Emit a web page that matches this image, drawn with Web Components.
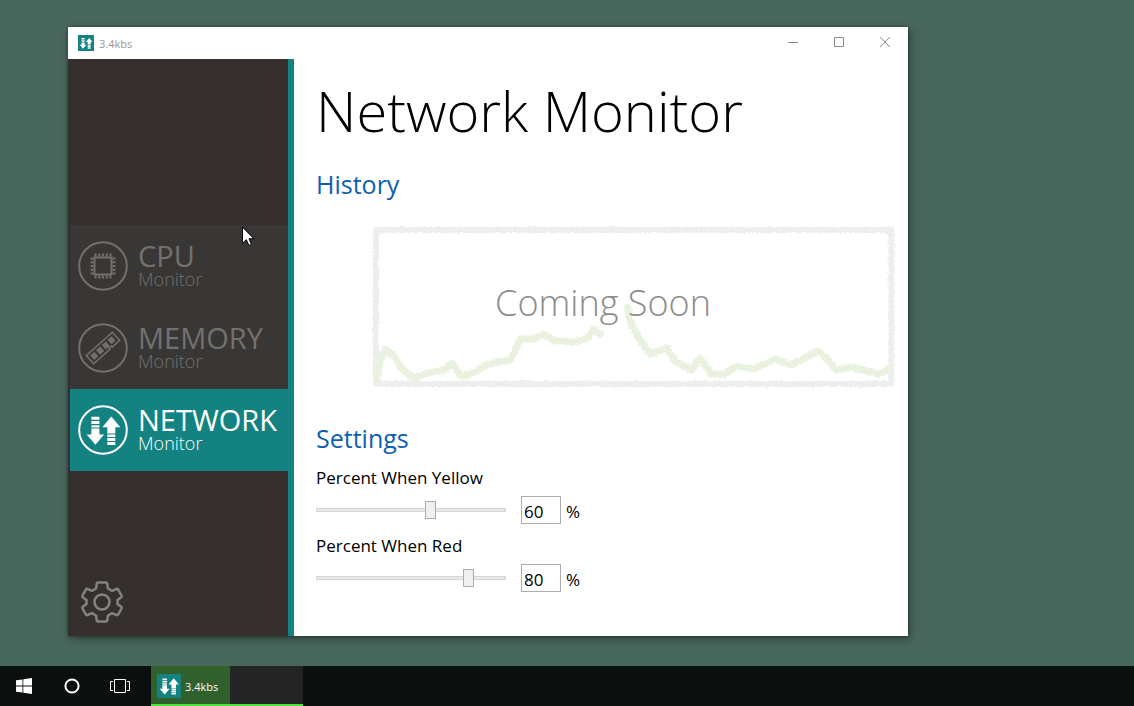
<!DOCTYPE html>
<html lang="en">
<head>
<meta charset="utf-8">
<title>Network Monitor</title>
<style>
  html, body {
    height: 100%;
    margin: 0;
  }
  body {
    --teal: #148280;
    --blue: #0e5fb0;
    font-family: "Open Sans", "Noto Sans", sans-serif;
    color: #000;
    background: #48675d;
  }
</style>
</head>
<body>
<monitor-desktop>
  <app-window caption="3.4kbs">
    <side-nav slot="nav">
      <nav-item name="CPU" icon="cpu"></nav-item>
      <nav-item name="MEMORY" icon="memory"></nav-item>
      <nav-item name="NETWORK" icon="network" active></nav-item>
    </side-nav>
    <monitor-page heading="Network Monitor">
      <history-chart slot="history"></history-chart>
      <percent-setting label="Percent When Yellow" value="60"></percent-setting>
      <percent-setting label="Percent When Red" value="80"></percent-setting>
    </monitor-page>
  </app-window>
  <mouse-pointer slot="pointer"></mouse-pointer>
  <task-bar slot="taskbar" caption="3.4kbs"></task-bar>
</monitor-desktop>

<script>
// up/down arrows, drawn on a 50x50 grid and shared by every network icon
const ARROWS = /* html */ `
  <path d="M13.400 11.700h8v3h-8zM13.400 16h8v3h-8zM13.400 20.200h8v2.400h-8zM13.400 23.600h8v6h4.700l-8.700 10.200l-8.700-10.200h4.700z"/>
  <path d="M29.300 40h8v-3h-8zM29.300 36h8v-3h-8zM29.300 32h8v-2.600h-8zM29.300 28.400h8v-6.200h5l-9-10.600l-9 10.600h5z"/>
`;

const ICONS = {
  cpu: /* html */ `
    <path fill="none" stroke="currentColor" stroke-width="2" d="M16.500 16.500h17v17h-17z"/>
    <path fill="none" stroke="currentColor" stroke-width="2"
      d="M17.500 12.500v3M21.300 12.500v3M25 12.500v3M28.700 12.500v3M32.500 12.500v3
         M17.500 34.500v3M21.300 34.500v3M25 34.500v3M28.700 34.500v3M32.500 34.500v3
         M12.500 17.500h3M12.500 21.300h3M12.500 25h3M12.500 28.700h3M12.500 32.500h3
         M34.500 17.500h3M34.500 21.300h3M34.500 25h3M34.500 28.700h3M34.500 32.500h3"/>
  `,
  memory: /* html */ `
    <g transform="rotate(-42 25 25)">
      <path fill="none" stroke="currentColor" stroke-width="1.500" d="M7.500 19.500h35v11h-10v-1.500h-3v1.500h-22z"/>
      <path d="M10.500 22h5.500v6h-5.500zM18.300 22h5.500v6h-5.500zM26 22h5.500v6h-5.500zM33.800 22h5.500v6h-5.500z"/>
    </g>
  `,
  network: ARROWS
};

class MonitorDesktop extends HTMLElement {
  constructor () {
    super();
    this.attachShadow({ mode: 'open' });
    this.shadowRoot.innerHTML = /* html */ `
      <style>
        :host {
          display: flex;
          flex-direction: column;
          min-height: 100vh;
          position: relative;
        }
        .desk {
          flex: 1;
          display: flex;
          box-sizing: border-box;
          padding: 27px 19.9% 30px 6%;
        }
        ::slotted(app-window) {
          flex: 1;
        }
      </style>
      <div class="desk"><slot></slot></div>
      <slot name="pointer"></slot>
      <slot name="taskbar"></slot>
    `;
  }
}
window.customElements.define('monitor-desktop', MonitorDesktop);

class AppWindow extends HTMLElement {
  constructor () {
    super();
    this.attachShadow({ mode: 'open' });
    this.shadowRoot.innerHTML = /* html */ `
      <style>
        :host {
          display: flex;
          flex-direction: column;
          background: #fff;
          box-shadow: 0 0 3px rgba(0, 0, 0, 0.4), 2px 3px 8px rgba(0, 0, 0, 0.35);
        }
        header {
          display: flex;
          align-items: center;
          height: 32px;
          padding-left: 10px;
          color: #999;
          font-size: 11px;
        }
        .logo {
          width: 16px;
          height: 16px;
          margin-right: 5px;
          background: var(--teal);
          fill: #fff;
        }
        .caption {
          flex: 1;
        }
        button {
          display: flex;
          align-items: center;
          justify-content: center;
          width: 46px;
          height: 32px;
          padding: 0;
          border: 0;
          background: none;
        }
        button svg {
          width: 12px;
          height: 12px;
          fill: none;
          stroke: #8c8c8c;
        }
        .body {
          flex: 1;
          display: flex;
        }
        ::slotted(monitor-page) {
          flex: 1;
        }
      </style>
      <header>
        <svg class="logo" viewBox="4 4 42 42" aria-hidden="true">${ARROWS}</svg>
        <span class="caption"></span>
        <button aria-label="Minimize"><svg viewBox="0 0 12 12"><path d="M1 5.500h10"/></svg></button>
        <button aria-label="Maximize"><svg viewBox="0 0 12 12"><path d="M1.500.500h9v9h-9z"/></svg></button>
        <button aria-label="Close"><svg viewBox="0 0 12 12"><path d="M1 0l10 10M11 0L1 10"/></svg></button>
      </header>
      <div class="body">
        <slot name="nav"></slot>
        <slot></slot>
      </div>
    `;
  }

  connectedCallback () {
    this.shadowRoot.querySelector('.caption').textContent = this.getAttribute('caption');
  }
}
window.customElements.define('app-window', AppWindow);

class SideNav extends HTMLElement {
  constructor () {
    super();
    this.attachShadow({ mode: 'open' });
    this.shadowRoot.innerHTML = /* html */ `
      <style>
        :host {
          display: grid;
          /* keeps the items in the middle and the gear at the bottom */
          grid-template-rows: 1fr auto 1fr;
          box-sizing: border-box;
          width: 226px;
          padding-left: 2px;
          border-right: 6px solid var(--teal);
          background: #35302e;
        }
        nav {
          grid-row: 2;
        }
        button {
          grid-row: 3;
          align-self: end;
          justify-self: start;
          width: 44px;
          height: 44px;
          margin: 0 0 12px 10px;
          padding: 0;
          border: 0;
          background: none;
        }
        svg {
          display: block;
          fill: none;
          stroke: #858382;
          stroke-width: 2.5;
          stroke-linejoin: round;
        }
      </style>
      <nav aria-label="Monitors"><slot></slot></nav>
      <button aria-label="Options">
        <svg width="44" height="44" viewBox="0 0 44 44">
          <path d="M18 2.500H26Q27 2.500 27.200 3.500L28 8.500L32 10.800L36.500 9Q37.600 8.600 38.200 9.600L41.500 15.500Q42 16.500 41.200 17.200L37.500 20V24L41.200 26.800Q42 27.500 41.500 28.500L38.200 34.400Q37.600 35.400 36.500 35L32 33.200L28 35.500L27.200 40.500Q27 41.500 26 41.500H18Q17 41.500 16.800 40.500L16 35.500L12 33.200L7.500 35Q6.400 35.400 5.800 34.400L2.500 28.500Q2 27.500 2.800 26.800L6.500 24V20L2.800 17.200Q2 16.500 2.500 15.500L5.800 9.600Q6.400 8.600 7.500 9L12 10.800L16 8.500L16.800 3.500Q17 2.500 18 2.500Z"/>
          <circle cx="22" cy="22" r="7.500"/>
        </svg>
      </button>
    `;
  }
}
window.customElements.define('side-nav', SideNav);

class NavItem extends HTMLElement {
  constructor () {
    super();
    this.attachShadow({ mode: 'open' });
  }

  connectedCallback () {
    this.shadowRoot.innerHTML = /* html */ `
      <style>
        :host {
          display: block;
          color: #73716f;
          background: #393735;
        }
        :host([active]) {
          color: #fff;
          background: var(--teal);
        }
        a {
          display: flex;
          align-items: center;
          gap: 10px;
          height: 82px;
          padding-left: 8px;
          color: inherit;
          text-decoration: none;
        }
        svg {
          width: 50px;
          height: 50px;
          fill: currentColor;
        }
        .name, .kind {
          display: block;
        }
        .name {
          font-size: 29px;
          line-height: 26px;
        }
        .kind {
          font-size: 18px;
          line-height: 20px;
          font-weight: 300;
        }
      </style>
      <a href="#${this.getAttribute('icon')}">
        <svg viewBox="0 0 50 50" aria-hidden="true">
          <circle cx="25" cy="25" r="23.800" fill="none" stroke="currentColor" stroke-width="2"/>
          ${ICONS[this.getAttribute('icon')]}
        </svg>
        <span>
          <span class="name">${this.getAttribute('name')}</span>
          <span class="kind">Monitor</span>
        </span>
      </a>
    `;
  }
}
window.customElements.define('nav-item', NavItem);

class MonitorPage extends HTMLElement {
  constructor () {
    super();
    this.attachShadow({ mode: 'open' });
    this.shadowRoot.innerHTML = /* html */ `
      <style>
        :host {
          display: block;
          padding: 13px 14px 0 22px;
        }
        h1, h2 {
          margin: 0;
        }
        h1 {
          font-size: 56px;
          line-height: 76px;
          font-weight: 300;
        }
        h2 {
          font-size: 25px;
          line-height: 32px;
          font-weight: 400;
          color: var(--blue);
        }
        .history {
          margin-top: 20px;
        }
        .settings {
          display: flex;
          flex-direction: column;
          gap: 10px;
          margin-top: 36px;
        }
        .settings h2 {
          padding-bottom: 2px;
        }
      </style>
      <h1></h1>
      <section class="history">
        <h2>History</h2>
        <slot name="history"></slot>
      </section>
      <section class="settings">
        <h2>Settings</h2>
        <slot></slot>
      </section>
    `;
  }

  connectedCallback () {
    this.shadowRoot.querySelector('h1').textContent = this.getAttribute('heading');
  }
}
window.customElements.define('monitor-page', MonitorPage);

class HistoryChart extends HTMLElement {
  constructor () {
    super();
    this.attachShadow({ mode: 'open' });
    this.shadowRoot.innerHTML = /* html */ `
      <style>
        :host {
          display: block;
          margin: 26px 0 0 56px;
        }
        svg {
          display: block;
          width: 100%;
          overflow: visible;
        }
        .frame, .line {
          fill: none;
          stroke-linejoin: round;
          filter: url(#rough);
        }
        .frame {
          stroke: #eee;
          stroke-width: 6;
        }
        .line {
          stroke: #e9f2df;
          stroke-width: 7;
        }
        text {
          font-size: 36px;
          font-weight: 300;
          fill: #8f8b8b;
        }
      </style>
      <svg viewBox="0 0 522 160">
        <filter id="rough" x="-5%" y="-10%" width="110%" height="120%">
          <feTurbulence type="fractalNoise" baseFrequency="0.5" numOctaves="2" seed="4"/>
          <feDisplacementMap in="SourceGraphic" scale="5" xChannelSelector="R" yChannelSelector="G"/>
          <feGaussianBlur stdDeviation="0.6"/>
        </filter>
        <path class="frame" d="M4 4h515v154h-515z"/>
        <path class="line" d="M5 156L8 136L13 123L21 129L31 144L42 152L55 147L72 144L80 137L89 150L103 146L116 138L138 134L143 125L148 113L161 113L172 108L183 115L201 116L214 113L222 103L231 110"/>
        <path class="line" d="M255 78L258 95L267 113L278 128L295 122L303 135L319 144L328 132L339 148L352 148L364 140L381 143L403 133L419 139L446 125L453 131L464 144L479 141L507 148L520 141"/>
        <text x="123" y="90">Coming Soon</text>
      </svg>
    `;
  }
}
window.customElements.define('history-chart', HistoryChart);

class PercentSetting extends HTMLElement {
  constructor () {
    super();
    this.attachShadow({ mode: 'open' });
    this.shadowRoot.innerHTML = /* html */ `
      <style>
        :host {
          display: block;
          font-size: 17px;
        }
        label {
          display: block;
          margin-bottom: 6px;
          line-height: 24px;
        }
        .row {
          display: flex;
          align-items: center;
        }
        input {
          box-sizing: border-box;
          font: inherit;
        }
        input[type=range] {
          appearance: none;
          /* the thumb hangs half its width over each end of the track */
          width: 202px;
          height: 18px;
          margin: 0 9px 0 -6px;
          background:
            linear-gradient(#e7eaea, #e7eaea) center / 188px 2px no-repeat,
            linear-gradient(#d6d6d6, #d6d6d6) center / 190px 4px no-repeat;
        }
        input[type=range]::-webkit-slider-thumb {
          appearance: none;
          box-sizing: border-box;
          width: 11px;
          height: 18px;
          border: 1px solid #acacac;
          background: #f0f0f0;
        }
        input[type=text] {
          width: 40px;
          height: 28px;
          margin-right: 5px;
          padding: 2px 2px 0;
          border: 1px solid #abadb3;
          background: #fff;
        }
        .unit {
          padding-top: 2px;
        }
      </style>
      <label for="range"></label>
      <div class="row">
        <input type="range" id="range" min="0" max="100">
        <input type="text" inputmode="numeric">
        <span class="unit">%</span>
      </div>
    `;

    this.range = this.shadowRoot.querySelector('[type=range]');
    this.box = this.shadowRoot.querySelector('[type=text]');
    this.range.addEventListener('input', () => { this.box.value = this.range.value; });
    this.box.addEventListener('input', () => { this.range.value = this.box.value; });
  }

  connectedCallback () {
    this.shadowRoot.querySelector('label').textContent = this.getAttribute('label');
    this.box.setAttribute('aria-label', this.getAttribute('label'));
    this.range.value = this.getAttribute('value');
    this.box.value = this.getAttribute('value');
  }
}
window.customElements.define('percent-setting', PercentSetting);

class MousePointer extends HTMLElement {
  constructor () {
    super();
    this.attachShadow({ mode: 'open' });
    this.shadowRoot.innerHTML = /* html */ `
      <style>
        /* floats over whatever is on the desktop */
        :host {
          display: block;
          position: absolute;
          left: 242px;
          top: 226px;
          pointer-events: none;
        }
        svg {
          display: block;
        }
      </style>
      <svg width="13" height="21" viewBox="0 0 13 21" aria-hidden="true">
        <path fill="#fff" stroke="#000" d="M.500 1.200V17.300L4.300 13.700L6.900 19.500L9.500 18.400L7 12.700H12Z"/>
      </svg>
    `;
  }
}
window.customElements.define('mouse-pointer', MousePointer);

class TaskBar extends HTMLElement {
  constructor () {
    super();
    this.attachShadow({ mode: 'open' });
    this.shadowRoot.innerHTML = /* html */ `
      <style>
        :host {
          display: flex;
          height: 40px;
          background: #0b0f0e;
        }
        button {
          display: flex;
          align-items: center;
          justify-content: center;
          box-sizing: border-box;
          width: 48px;
          padding: 0;
          border: 0;
          color: #fff;
          font: inherit;
          font-size: 11px;
          font-weight: 500;
          background: none;
        }
        .app {
          justify-content: flex-start;
          gap: 4px;
          width: 79px;
          margin-left: 7px;
          padding: 2px 0 0 6px;
          border-bottom: 2px solid #4de03c;
          background: #30602c;
        }
        .logo {
          width: 24px;
          height: 24px;
          background: var(--teal);
          fill: #fff;
        }
        .rest {
          box-sizing: border-box;
          width: 73px;
          border-bottom: 2px solid #4de03c;
          background: #242424;
        }
      </style>
      <button aria-label="Start">
        <svg width="16" height="16" viewBox="0 0 16 16" fill="#fff">
          <path d="M0 2.300L6.500 1.400V7.600H0zM7.300 1.300L16 0V7.600H7.300zM0 8.400H6.500V14.600L0 13.700zM7.300 8.400H16V16L7.300 14.700z"/>
        </svg>
      </button>
      <button aria-label="Search">
        <svg width="16" height="16" viewBox="0 0 16 16"><circle cx="8" cy="8" r="6.600" fill="none" stroke="#fff" stroke-width="2"/></svg>
      </button>
      <button aria-label="Task view">
        <svg width="20" height="14" viewBox="0 0 20 14" fill="none" stroke="#fff"><path d="M4.500.500h11v13h-11zM3 2.500H.500v9H3M17 2.500h2.500v9H17"/></svg>
      </button>
      <button class="app">
        <svg class="logo" viewBox="4 4 42 42" aria-hidden="true">${ARROWS}</svg>
        <span class="caption"></span>
      </button>
      <div class="rest"></div>
    `;
  }

  connectedCallback () {
    this.shadowRoot.querySelector('.caption').textContent = this.getAttribute('caption');
  }
}
window.customElements.define('task-bar', TaskBar);
</script>
</body>
</html>
